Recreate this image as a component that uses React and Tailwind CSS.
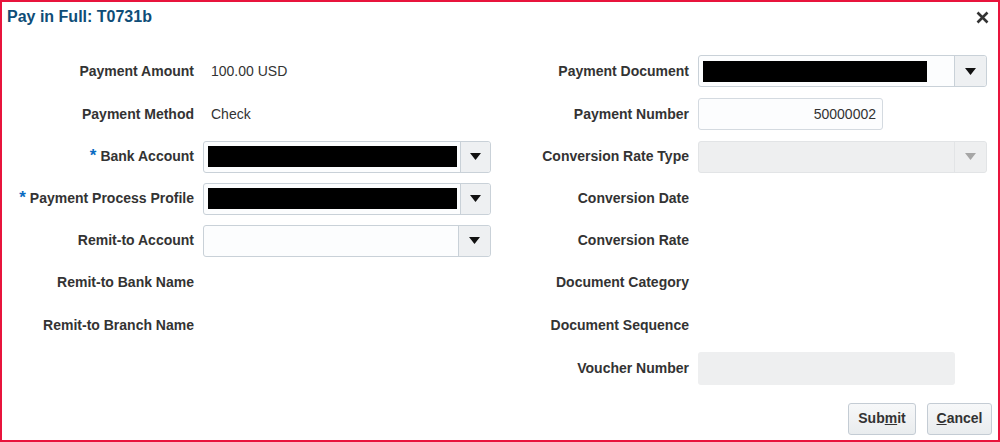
import React from 'react';

const font = { fontFamily: '"Liberation Sans", Arial, sans-serif' };

const alturas = [43, 43, 42, 42, 42, 42, 43, 43];

function Arrow({ disabled }) {
  return (
    <svg width="11" height="7" viewBox="0 0 11 7">
      <polygon points="0,0 11,0 5.5,7" fill={disabled ? '#a6a6a6' : '#111'} />
    </svg>
  );
}

function Select({ width, redact, disabled }) {
  return (
    <div
      className={`flex h-[32px] rounded-[3px] border ${disabled ? 'border-[#e2e4e6] bg-[#eeeff0]' : 'border-[#c9d1d8] bg-[#fcfdfe]'}`}
      style={{ width }}
    >
      <div className="flex flex-1 items-center pl-[4px] pr-[3px]">
        {redact ? <div className="h-[21px] bg-black" style={{ width: redact }} /> : null}
      </div>
      <div
        className={`flex w-[32px] items-center justify-center rounded-r-[3px] border-l ${disabled ? 'border-[#e2e4e6] bg-[#eeeff0]' : 'border-[#c9d1d8] bg-[#eef0f2]'}`}
      >
        <Arrow disabled={disabled} />
      </div>
    </div>
  );
}

function Row({ label, required, labelWidth, idx, children }) {
  return (
    <div className="flex items-center" style={{ height: alturas[idx] }}>
      <div
        className="shrink-0 text-right text-[14px] font-bold text-[#333]"
        style={{ width: labelWidth }}
      >
        {required && <span className="mr-[4px] text-[17px] leading-none text-[#0a6bc2]">*</span>}
        {label}
      </div>
      <div className="ml-[9px] flex items-center">{children}</div>
    </div>
  );
}

function Value({ children }) {
  return <span className="pl-[8px] text-[14px] text-[#333]">{children}</span>;
}

export default function App() {
  return (
    <div className="h-[442px] w-[1000px] border-2 border-[#e8143c] bg-white" style={font}>
      {/* encabezado */}
      <div className="flex h-[30px] items-center justify-between pl-[5px] pr-[9px]">
        <h1 className="text-[16px] font-bold text-[#0f4d77]">Pay in Full: T0731b</h1>
        <svg width="13" height="13" viewBox="0 0 13 13">
          <path d="M1.5 1.5 L11.5 11.5 M11.5 1.5 L1.5 11.5" stroke="#333" strokeWidth="2.6" />
        </svg>
      </div>

      <div className="mt-[17.5px] flex">
        {/* columna izquierda */}
        <div className="w-[496px]">
          <Row idx={0} label="Payment Amount" labelWidth={192}>
            <Value>100.00 USD</Value>
          </Row>
          <Row idx={1} label="Payment Method" labelWidth={192}>
            <Value>Check</Value>
          </Row>
          <Row idx={2} label="Bank Account" required labelWidth={192}>
            <Select width={288} redact={249} />
          </Row>
          <Row idx={3} label="Payment Process Profile" required labelWidth={192}>
            <Select width={288} redact={249} />
          </Row>
          <Row idx={4} label="Remit-to Account" labelWidth={192}>
            <Select width={288} />
          </Row>
          <Row idx={5} label="Remit-to Bank Name" labelWidth={192} />
          <Row idx={6} label="Remit-to Branch Name" labelWidth={192} />
        </div>

        {/* columna derecha */}
        <div className="flex-1">
          <Row idx={0} label="Payment Document" labelWidth={191}>
            <Select width={289} redact={224} />
          </Row>
          <Row idx={1} label="Payment Number" labelWidth={191}>
            <div className="flex h-[32px] w-[185px] items-center justify-end rounded-[3px] border border-[#d4dae0] bg-[#fcfdfe] pr-[6px] text-[14px] text-[#333]">
              50000002
            </div>
          </Row>
          <Row idx={2} label="Conversion Rate Type" labelWidth={191}>
            <Select width={289} disabled />
          </Row>
          <Row idx={3} label="Conversion Date" labelWidth={191} />
          <Row idx={4} label="Conversion Rate" labelWidth={191} />
          <Row idx={5} label="Document Category" labelWidth={191} />
          <Row idx={6} label="Document Sequence" labelWidth={191} />
          <Row idx={7} label="Voucher Number" labelWidth={191}>
            <div className="h-[33px] w-[257px] rounded-[3px] bg-[#eeeff0]" />
          </Row>
        </div>
      </div>

      {/* botones */}
      <div className="mt-[13px] flex justify-end gap-[11px] pr-[6px]">
        <button className="h-[32px] w-[68px] rounded-[3px] border border-[#c4ccd4] bg-gradient-to-b from-[#f7f8f9] to-[#e9ecee] text-[14px] font-bold text-[#333]">
          Sub<span className="underline">m</span>it
        </button>
        <button className="h-[32px] w-[65px] rounded-[3px] border border-[#c4ccd4] bg-gradient-to-b from-[#f7f8f9] to-[#e9ecee] text-[14px] font-bold text-[#333]">
          <span className="underline">C</span>ancel
        </button>
      </div>
    </div>
  );
}
